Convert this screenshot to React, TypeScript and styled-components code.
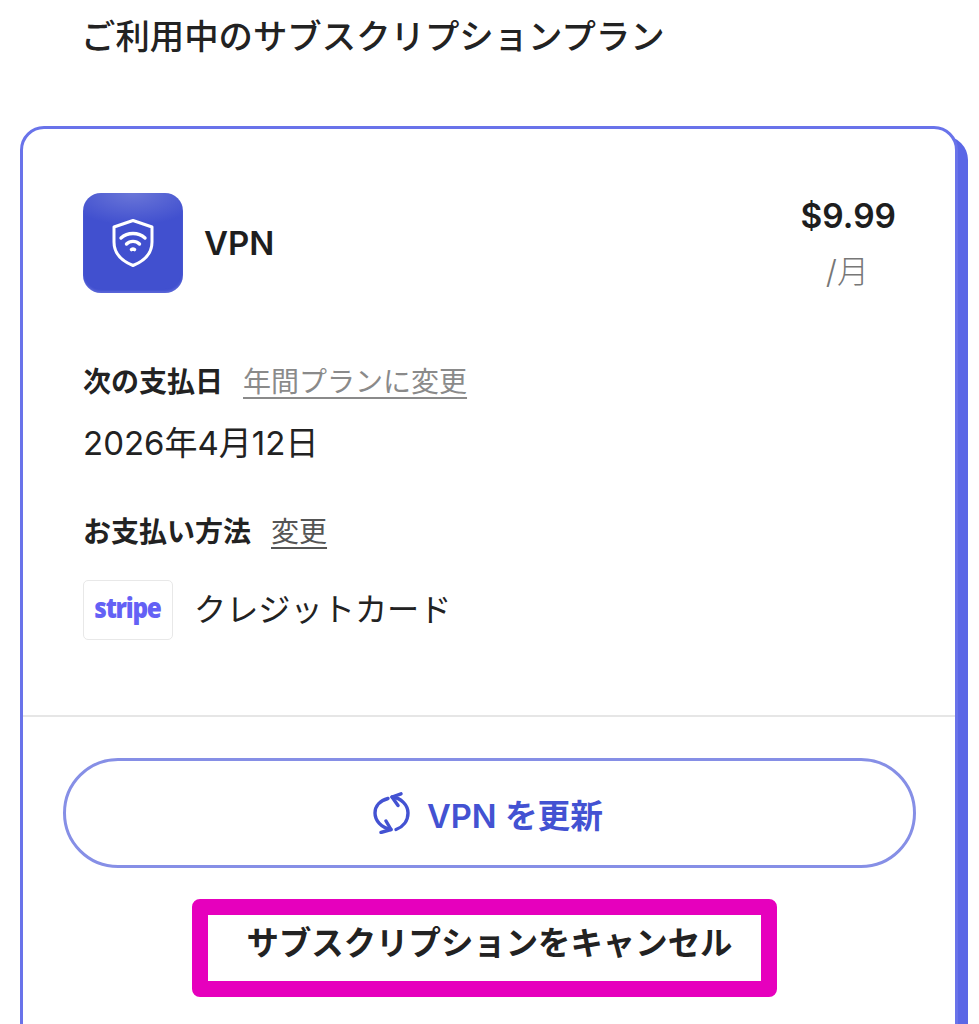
import React from "react";
import styled, { createGlobalStyle } from "styled-components";

const Global = createGlobalStyle`
  html, body { margin: 0; padding: 0; background: #fff; height: 1024px; overflow: hidden; }
  body { font-family: Inter, "Noto Sans CJK JP", sans-serif; color: #222; }
`;
const Page = styled.main`
  width: 979px;
  height: 1024px;
  overflow: hidden;
  padding: 0 21px 0 20px;
  box-sizing: border-box;
`;
const Title = styled.h1`
  margin: 0;
  height: 126px;
  padding: 16px 0 0 61px;
  box-sizing: border-box;
  font-size: 34.4px;
  line-height: 42px;
  font-weight: 500;
  color: #222;
`;
const Card = styled.section`
  box-sizing: border-box;
  width: 938px;
  height: 1000px;
  border: 3px solid #6973ea;
  border-radius: 24px;
  background: #fff;
  box-shadow: 10px 10px 0 #5b67e6;
`;
const Summary = styled.div`
  padding: 64px 60px 75px 60px;
  border-bottom: 2px solid #e6e6e6;
`;
const PlanRow = styled.div`
  display: flex;
  justify-content: space-between;
  align-items: flex-start;
`;
const Plan = styled.div`
  display: flex;
  align-items: center;
  gap: 21px;
`;
const PlanIcon = styled.div`
  width: 100px;
  height: 100px;
  border-radius: 18px;
  display: flex;
  align-items: center;
  justify-content: center;
  background: radial-gradient(ellipse 70% 32% at 50% 0%, #6a76d8 0%, #4250cf00 100%), #4150cf;
  box-shadow: inset 0 -2px 2px #5a66d8;
`;
const PlanName = styled.span`
  font-size: 33px;
  font-weight: 600;
  color: #1e1e1e;
`;
const Price = styled.div`
  display: flex;
  flex-direction: column;
  align-items: flex-end;
  margin-right: -1px;
  margin-top: 3px;
`;
const Amount = styled.span`
  font-size: 33.5px;
  line-height: 40px;
  font-weight: 600;
  color: #1e1e1e;
`;
const Period = styled.span`
  margin-top: 16px;
  margin-right: 27px;
  font-size: 32px;
  line-height: 40px;
  font-weight: 300;
  color: #777;
`;
const LabelRow = styled.div<{ $top: number }>`
  display: flex;
  align-items: center;
  gap: 20px;
  margin-top: ${(p) => p.$top}px;
  height: 40px;
`;
const Label = styled.span`
  font-size: 28px;
  font-weight: 700;
  color: #222;
`;
const LinkText = styled.a<{ $muted?: boolean }>`
  font-size: 28px;
  font-weight: 400;
  color: ${(p) => (p.$muted ? "#8a8a8a" : "#555")};
  text-decoration: underline;
  text-underline-offset: 5px;
  text-decoration-thickness: 2px;
`;
const DateText = styled.div`
  margin-top: 23px;
  font-size: 33px;
  line-height: 40px;
  font-weight: 400;
  color: #222;
`;
const PaymentRow = styled.div`
  display: flex;
  align-items: center;
  gap: 21px;
  margin-top: 30px;
`;
const StripeBox = styled.div`
  width: 90px;
  height: 60px;
  box-sizing: border-box;
  border: 1px solid #e8e8e8;
  border-radius: 5px;
  display: flex;
  align-items: center;
  justify-content: center;
`;
const StripeWord = styled.span`
  display: inline-block;
  margin: 0 1px 8px 0;
  font-family: "Open Sans", sans-serif;
  font-size: 29px;
  font-weight: 800;
  letter-spacing: -1.5px;
  color: #6461f5;
  transform: scaleX(0.84);
`;
const PaymentText = styled.span`
  margin-bottom: 6px;
  font-size: 32.2px;
  color: #222;
`;
const Actions = styled.div`
  display: flex;
  flex-direction: column;
  align-items: center;
  padding: 41px 39px 0 40px;
`;
const RenewButton = styled.button`
  box-sizing: border-box;
  width: 100%;
  height: 110px;
  border: 3px solid #868fe6;
  border-radius: 55px;
  background: #fff;
  display: flex;
  align-items: center;
  justify-content: center;
  gap: 17px;
  padding: 0 3px 0 0;
  font-family: inherit;
  font-size: 32.7px;
  font-weight: 600;
  color: #4352d2;
`;
const CancelButton = styled.button`
  box-sizing: border-box;
  margin-top: 31px;
  margin-right: 11px;
  width: 585px;
  height: 98px;
  border: 16px solid #e600bd;
  border-radius: 8px;
  outline: none;
  background: #fff;
  padding: 0 0 16px 11px;
  font-family: inherit;
  font-size: 32.4px;
  font-weight: 600;
  color: #222;
`;

export default function App() {
  return (
    <Page>
      <Global />
      <Title>ご利用中のサブスクリプションプラン</Title>
      <Card>
        <Summary>
          <PlanRow>
            <Plan>
              <PlanIcon>
                <svg width="44" height="50" viewBox="0 0 44 50" fill="none" stroke="#fff" strokeLinecap="round">
                  <path d="M22 2.5 L41 9 V24 C41 36 32 43.5 22 47.5 C12 43.5 3 36 3 24 V9 Z" strokeWidth="3" strokeLinejoin="round" />
                  <path d="M10 20 C16.5 14 27.5 14 34 20" strokeWidth="3.4" />
                  <path d="M15.5 26 C19 22.5 25 22.5 28.5 26" strokeWidth="3.4" />
                  <path d="M20.5 31.5 C21.5 31 22.5 31 23.5 31.5" strokeWidth="3.6" />
                </svg>
              </PlanIcon>
              <PlanName>VPN</PlanName>
            </Plan>
            <Price>
              <Amount>$9.99</Amount>
              <Period>/月</Period>
            </Price>
          </PlanRow>
          <LabelRow $top={67}>
            <Label>次の支払日</Label>
            <LinkText $muted>年間プランに変更</LinkText>
          </LabelRow>
          <DateText>2026年4月12日</DateText>
          <LabelRow $top={47}>
            <Label>お支払い方法</Label>
            <LinkText>変更</LinkText>
          </LabelRow>
          <PaymentRow>
            <StripeBox>
              <StripeWord>stripe</StripeWord>
            </StripeBox>
            <PaymentText>クレジットカード</PaymentText>
          </PaymentRow>
        </Summary>
        <Actions>
          <RenewButton>
            <svg width="37" height="42" viewBox="0 0 37 42" fill="none" stroke="#4352d2" strokeWidth="3.4" strokeLinecap="round" strokeLinejoin="round">
              <path d="M19 5 C28 6 35 13 35 21 C35 29 30 35 23 37.5" />
              <path d="M15 6.5 C7 8.5 2 14 2 21 C2 28.5 8 35.5 18 37.5" />
              <path d="M28 1.8 L19 5 L25 13.5" />
              <path d="M8 40.5 L18 37.5 L13 29" />
            </svg>
            VPN を更新
          </RenewButton>
          <CancelButton>サブスクリプションをキャンセル</CancelButton>
        </Actions>
      </Card>
    </Page>
  );
}
